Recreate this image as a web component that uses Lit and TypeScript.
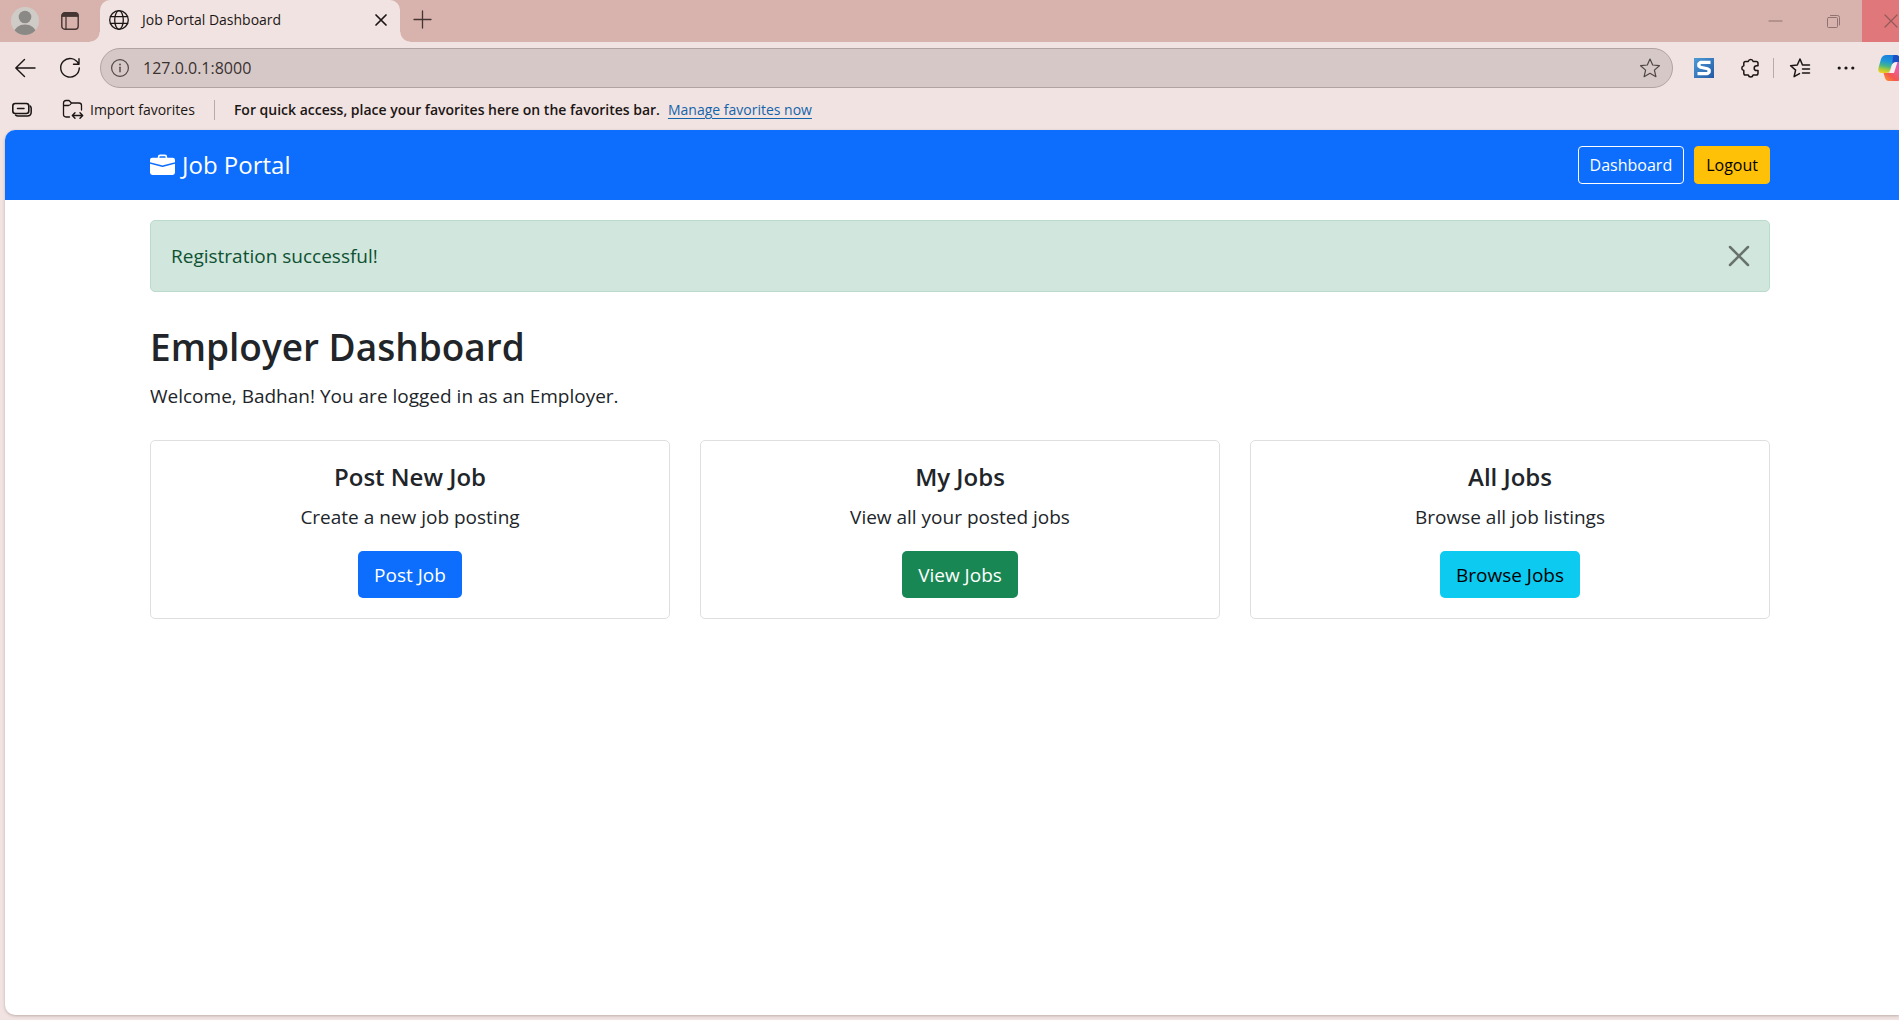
import { LitElement, html, svg, css } from "lit";
import { customElement, property, state } from "lit/decorators.js";

const icon = (size: number, body: unknown, view = `0 0 ${size} ${size}`) => html`
  <svg class="icon" width=${size} height=${size} viewBox=${view} aria-hidden="true">${body}</svg>
`;

const shared = css`
  *,
  *::before,
  *::after {
    box-sizing: border-box;
  }
  button {
    font: inherit;
    color: inherit;
    background: none;
    border: 0;
    padding: 0;
    margin: 0;
    cursor: pointer;
    display: inline-flex;
    align-items: center;
    justify-content: center;
  }
  .icon {
    display: block;
    flex: none;
    fill: none;
    stroke: currentColor;
    stroke-linecap: round;
    stroke-linejoin: round;
    overflow: visible;
  }
`;

@customElement("browser-tabs")
export class BrowserTabs extends LitElement {
  static styles = [
    shared,
    css`
      :host {
        display: flex;
        height: 42px;
        background: #d8b3ad;
        color: #453533;
        overflow: hidden;
      }
      .profile {
        width: 50px;
      }
      .panes {
        width: 40px;
      }
      .tab {
        position: relative;
        display: flex;
        align-items: center;
        width: 300px;
        margin-left: 10px;
        padding: 0 9px 2px;
        background: #f1e3e1;
        border-radius: 10px 10px 0 0;
        color: #1b1615;
        font-size: 14px;
        line-height: 20px;
      }
      .tab::before,
      .tab::after {
        content: "";
        position: absolute;
        bottom: 0;
        width: 10px;
        height: 10px;
      }
      .tab::before {
        left: -10px;
        background: radial-gradient(circle at 0 0, #d8b3ad 9px, #f1e3e1 10px);
      }
      .tab::after {
        right: -10px;
        background: radial-gradient(circle at 100% 0, #d8b3ad 9px, #f1e3e1 10px);
      }
      .title {
        flex: 1;
        margin-left: 13px;
        white-space: nowrap;
      }
      .close-tab {
        width: 20px;
        height: 20px;
      }
      .new-tab {
        width: 44px;
        padding-bottom: 3px;
      }
      .window {
        display: flex;
        margin-left: auto;
        margin-right: -21px;
        color: #8f7370;
      }
      .window button {
        width: 58px;
      }
      .window .quit {
        background: #e0777b;
        color: #94595a;
      }
    `,
  ];

  render() {
    return html`
      <button class="profile" aria-label="Profile">
        ${icon(
          28,
          svg`<defs><clipPath id="disc"><circle cx="14" cy="14" r="14"/></clipPath></defs>
          <g clip-path="url(#disc)" stroke="none">
            <rect width="28" height="28" fill="#cfccc8"/>
            <circle cx="14" cy="10" r="6.3" fill="#8b8986"/>
            <ellipse cx="14" cy="26" rx="11" ry="8.4" fill="#8b8986"/>
          </g>`,
        )}
      </button>
      <button class="panes" aria-label="Tab actions">
        ${icon(
          18,
          svg`<rect x=".8" y=".8" width="16.4" height="16.4" rx="3" stroke-width="1.4"/>
          <path d="M1 4V3.500Q1 1 3.500 1H14.500Q17 1 17 3.500V4Z" fill="currentColor"/>
          <path d="M5 5V17" stroke-width="1.300"/>`,
        )}
      </button>
      <div class="tab">
        ${icon(
          20,
          svg`<g stroke-width="1.300"><circle cx="10" cy="10" r="9.300"/>
          <ellipse cx="10" cy="10" rx="4.300" ry="9.300"/>
          <path d="M1.400 6.700H18.600M1.400 13.300H18.600"/></g>`,
        )}
        <span class="title">Job Portal Dashboard</span>
        <button class="close-tab" aria-label="Close tab">
          ${icon(10, svg`<path d="M0 0L10 10M10 0L0 10" stroke-width="1.700"/>`)}
        </button>
      </div>
      <button class="new-tab" aria-label="New tab">
        ${icon(17, svg`<path d="M8.500 0V17M0 8.500H17" stroke-width="1.300"/>`)}
      </button>
      <div class="window">
        <button aria-label="Minimise">
          ${icon(13, svg`<path d="M0 6H13" stroke-width="1.200"/>`)}
        </button>
        <button aria-label="Restore">
          ${icon(
            13,
            svg`<rect x=".5" y="2.500" width="10" height="10" rx="1"/>
            <path d="M3.500 .5H10.500Q12.500 .5 12.500 2.500V10"/>`,
          )}
        </button>
        <button class="quit" aria-label="Close window">
          ${icon(12, svg`<path d="M0 0L12 12M12 0L0 12" stroke-width="1.200"/>`)}
        </button>
      </div>
    `;
  }
}

@customElement("browser-toolbar")
export class BrowserToolbar extends LitElement {
  static styles = [
    shared,
    css`
      :host {
        display: flex;
        align-items: center;
        height: 52px;
        color: #1b1615;
        overflow: hidden;
      }
      .back {
        width: 50px;
        height: 40px;
      }
      .reload {
        width: 40px;
        height: 40px;
      }
      .address {
        flex: 1;
        display: flex;
        align-items: center;
        height: 40px;
        margin-left: 10px;
        padding: 0 12px 0 10px;
        border: 1px solid #b1a3a2;
        border-radius: 20px;
        background: #d6c8c7;
        color: #4f4645;
      }
      .address input {
        flex: 1;
        min-width: 0;
        margin-left: 14px;
        padding: 0;
        border: 0;
        outline: 0;
        background: none;
        color: #3a3231;
        font: inherit;
        font-size: 16px;
        line-height: 24px;
      }
      .tools {
        display: flex;
        align-items: center;
        margin-left: 8px;
        margin-right: -17px;
      }
      .tools button {
        width: 46px;
        height: 40px;
      }
      .rule {
        width: 1px;
        height: 20px;
        background: #b9a9a7;
        margin-right: 3px;
      }
      .tools .copilot {
        width: 47px;
        justify-content: flex-start;
        padding-left: 9px;
      }
    `,
  ];

  render() {
    return html`
      <button class="back" aria-label="Back">
        ${icon(20, svg`<path d="M20 10H.8M9.500 1.500L.8 10L9.500 18.500" stroke-width="1.400"/>`)}
      </button>
      <button class="reload" aria-label="Reload">
        ${icon(
          20,
          svg`<path d="M18.500 6A9.300 9.300 0 1 0 19.300 10M19 .8V6.300H13.500" stroke-width="1.400"/>`,
        )}
      </button>
      <div class="address">
        ${icon(
          18,
          svg`<circle cx="9" cy="9" r="8.400" stroke-width="1.200"/>
          <path d="M9 8.200V12.800" stroke-width="1.400"/>
          <circle cx="9" cy="5.500" r=".9" fill="currentColor" stroke="none"/>`,
        )}
        <input type="text" aria-label="Address" value="127.0.0.1:8000" />
        <button aria-label="Add to favorites">
          ${icon(
            20,
            svg`<path d="M10 1L12.700 7L19.400 7.700L14.400 12.100L15.900 18.700L10 15.300L4.100 18.700L5.600 12.100L.6 7.700L7.300 7Z" stroke-width="1.200"/>`,
          )}
        </button>
      </div>
      <div class="tools">
        <button aria-label="Screen capture">
          ${icon(
            20,
            svg`<defs><linearGradient id="sg" x1="0" y1="0" x2="1" y2="1">
              <stop offset="0" stop-color="#4c9bd6"/><stop offset="1" stop-color="#2459a4"/>
            </linearGradient></defs>
            <rect width="20" height="20" fill="url(#sg)" stroke="none"/>
            <path d="M16.500 4.300H6.500L4.800 6V8L6.500 9.300L13.500 10.700L15.200 12V14L13.500 15.700H3.500"
              stroke="#fff" stroke-width="3.200" stroke-linecap="butt"/>`,
          )}
        </button>
        <button aria-label="Extensions">
          ${icon(
            20,
            svg`<path d="M3.800 5.200Q3.800 3.400 5.600 3.400H8.300A2.450 2.450 0 0 1 13.100 3.400H16.200Q18 3.400 18 5.200V7.800H16.600A2.400 2.400 0 0 0 16.600 12.600H18V15.200Q18 17 16.200 17H13.100A2.450 2.450 0 0 1 8.300 17H5.600Q3.800 17 3.800 15.200V12.600A2.450 2.450 0 0 1 3.800 7.800Z" stroke-width="1.500"/>`,
          )}
        </button>
        <span class="rule"></span>
        <button aria-label="Favorites">
          ${icon(
            20,
            svg`<path d="M12.500 7L10 1L7.300 7L.6 7.700L5.600 12.100L4.100 18.700L9.500 15.600M12.500 7H19.500M12.500 11H19.500M12.500 15H19.500" stroke-width="1.500"/>`,
          )}
        </button>
        <button aria-label="Settings and more">
          ${icon(
            18,
            svg`<g fill="currentColor" stroke="none"><circle cx="2.200" cy="9" r="1.600"/><circle cx="9" cy="9" r="1.600"/><circle cx="15.800" cy="9" r="1.600"/></g>`,
          )}
        </button>
        <button class="copilot" aria-label="Copilot">
          ${icon(
            28,
            svg`<defs>
              <linearGradient id="c1" x1=".5" y1="0" x2=".3" y2="1">
                <stop offset="0" stop-color="#1a7fdc"/><stop offset=".35" stop-color="#1f97d8"/>
                <stop offset=".6" stop-color="#45b58a"/><stop offset=".8" stop-color="#a9c93a"/>
                <stop offset="1" stop-color="#f3cf22"/>
              </linearGradient>
              <linearGradient id="c2" x1="0" y1="1" x2="1" y2="0">
                <stop offset="0" stop-color="#ff9a2b"/><stop offset=".3" stop-color="#f4574f"/>
                <stop offset=".6" stop-color="#ee5c9c"/><stop offset="1" stop-color="#a85be8"/>
              </linearGradient>
            </defs>
            <g stroke="none">
              <path d="M19.500 27H10.500Q8 27 7 24L5.500 19H9Q12.500 19 13.500 15.500L15.500 11Q16.500 8 20 8H24Q28.800 8 27.400 13.500L25 23Q23.700 27 19.500 27Z" fill="url(#c2)"/>
              <path d="M8.500 1H18.500L17 7Q14.500 8 13.500 11.500L12 16.500Q11 19 8 19H4Q-.8 19 .6 13.500L3 5Q4.300 1 8.500 1Z" fill="url(#c1)"/>
              <path d="M15.500 1H18.500Q21 1 22 4L23 8H18Q15.500 8 14.300 10Q14.500 5 15.500 1Z" fill="#1d4fc4"/>
              <path d="M14.600 10.500Q15.800 8 19.500 8L16 19H10.500Q12.300 18 13 15.500Z" fill="#f6eef0"/>
            </g>`,
          )}
        </button>
      </div>
    `;
  }
}

@customElement("favorites-bar")
export class FavoritesBar extends LitElement {
  static styles = [
    shared,
    css`
      :host {
        display: flex;
        align-items: center;
        height: 36px;
        padding: 0 12px 5px;
        color: #1b1615;
        font-size: 14px;
        line-height: 20px;
        white-space: nowrap;
      }
      .import {
        gap: 7px;
        margin-left: 30px;
      }
      .rule {
        width: 1px;
        height: 20px;
        margin: 0 19px;
        background: #b9a9a7;
      }
      .hint {
        margin: 0;
        font-weight: 600;
      }
      a {
        margin-left: 8px;
        color: #1464ab;
        text-underline-offset: 3px;
      }
    `,
  ];

  render() {
    return html`
      <button aria-label="Saved pages">
        ${icon(
          20,
          svg`<rect x=".8" y="3.500" width="16" height="10" rx="2.500" stroke-width="1.600"/>
          <path d="M5.500 8.500H12" stroke-width="1.500"/>
          <path d="M18.200 6Q19.200 7 19.200 8.500V12Q19.200 16 15.200 16H6Q4.500 16 3.500 15" stroke-width="1.500"/>`,
        )}
      </button>
      <button class="import">
        ${icon(
          21,
          svg`<path d="M7.500 18H4Q1.500 18 1.500 15.500V4Q1.500 1.500 4 1.500H7L9.500 4H17Q19.500 4 19.500 6.500V11M1.500 6.500H6.500Q8 6.500 9.500 4" stroke-width="1.300"/>
          <path d="M10.500 16.500H20.500M13 13.800L10.300 16.500L13 19.200M18 13.800L20.700 16.500L18 19.200" stroke-width="1.400"/>`,
        )}
        Import favorites
      </button>
      <span class="rule"></span>
      <p class="hint">For quick access, place your favorites here on the favorites bar.</p>
      <a href="#favorites">Manage favorites now</a>
    `;
  }
}

@customElement("job-card")
export class JobCard extends LitElement {
  @property() heading = "";
  @property() text = "";
  @property() action = "";
  @property({ reflect: true }) tone = "primary";

  static styles = [
    shared,
    css`
      :host {
        display: flex;
        flex-direction: column;
        align-items: center;
        padding: 21px 20px 20px;
        border: 1px solid #dfdfdf;
        border-radius: 5px;
        background: #fff;
        text-align: center;
      }
      h2 {
        margin: 0 0 10px;
        font-size: 24px;
        line-height: 30px;
        font-weight: 600;
      }
      p {
        margin: 0 0 19px;
      }
      a {
        padding: 9px 16px 8px;
        border-radius: 5px;
        background: #0d6efd;
        color: #fff;
        text-decoration: none;
      }
      :host([tone="success"]) a {
        background: #198754;
      }
      :host([tone="info"]) a {
        background: #0dcaf0;
        color: #000;
      }
    `,
  ];

  render() {
    return html`
      <h2>${this.heading}</h2>
      <p>${this.text}</p>
      <a href="#jobs">${this.action}</a>
    `;
  }
}

@customElement("app-root")
export class AppRoot extends LitElement {
  @state() private notice = true;

  static styles = [
    shared,
    css`
      :host {
        display: flex;
        flex-direction: column;
        min-height: 100vh;
        background: #f1e3e1;
        font-family: "Open Sans", "Noto Sans", sans-serif;
        overflow: hidden;
      }
      .page {
        flex: 1;
        margin: 0 0 5px 5px;
        background: #fff;
        border-radius: 10px 0 0 10px;
        box-shadow: 0 1px 3px #8f7f7d88;
        color: #212529;
        font-size: 19px;
        line-height: 30px;
        overflow: hidden;
      }
      .band {
        padding-left: 16px;
      }
      .bar {
        background: #0d6efd;
      }
      .container {
        max-width: 1620px;
        margin: 0 auto;
      }
      nav {
        display: flex;
        align-items: center;
        gap: 10px;
        height: 70px;
      }
      .brand {
        display: flex;
        align-items: center;
        gap: 7px;
        margin-right: auto;
        color: #fff;
        font-size: 24px;
        text-decoration: none;
      }
      .brand .icon {
        fill: currentColor;
        stroke: none;
      }
      .btn {
        padding: 5px 11px;
        border: 1px solid #fff;
        border-radius: 4px;
        color: #fff;
        font-size: 16px;
        line-height: 26px;
        text-decoration: none;
      }
      .logout {
        border-color: #ffc107;
        background: #ffc107;
        color: #000;
      }
      .alert {
        display: flex;
        align-items: center;
        justify-content: space-between;
        margin-top: 20px;
        padding: 20px;
        border: 1px solid #badbcc;
        border-radius: 5px;
        background: #d1e7dd;
        color: #0f5132;
      }
      .alert .icon {
        color: #000;
        opacity: 0.5;
      }
      h1 {
        margin: 31px 0 10px;
        font-size: 37px;
        line-height: 48px;
        font-weight: 600;
      }
      .welcome {
        margin: 0 0 29px;
      }
      .cards {
        display: grid;
        grid-template-columns: repeat(3, 1fr);
        gap: 30px;
      }
    `,
  ];

  render() {
    return html`
      <browser-tabs></browser-tabs>
      <browser-toolbar></browser-toolbar>
      <favorites-bar></favorites-bar>
      <div class="page">
        <header class="band bar">
          <nav class="container">
            <a class="brand" href="#home">
              ${icon(
                25,
                svg`<path d="M6.500 1A1.500 1.500 0 0 0 5 2.500V3H1.500A1.500 1.500 0 0 0 0 4.500v1.384l7.614 2.030a1.500 1.500 0 0 0 .772 0L16 5.884V4.500A1.500 1.500 0 0 0 14.500 3H11v-.5A1.500 1.500 0 0 0 9.500 1h-3zm0 1h3a.5.5 0 0 1 .5.5V3H6v-.5a.5.5 0 0 1 .5-.5z"/>
                <path d="M0 12.500A1.500 1.500 0 0 0 1.500 14h13a1.500 1.500 0 0 0 1.500-1.500V6.850L8.129 8.947a.5.5 0 0 1-.258 0L0 6.850v5.650z"/>`,
                "0 0 16 16",
              )}
              Job Portal
            </a>
            <a class="btn" href="#dashboard">Dashboard</a>
            <a class="btn logout" href="#logout">Logout</a>
          </nav>
        </header>
        <main class="band">
          <div class="container">
            ${this.notice
              ? html`<div class="alert" role="alert">
                  <span>Registration successful!</span>
                  <button aria-label="Close" @click=${() => (this.notice = false)}>
                    ${icon(20, svg`<path d="M1 1L19 19M19 1L1 19" stroke-width="2.500"/>`)}
                  </button>
                </div>`
              : null}
            <h1>Employer Dashboard</h1>
            <p class="welcome">Welcome, Badhan! You are logged in as an Employer.</p>
            <div class="cards">
              <job-card heading="Post New Job" text="Create a new job posting" action="Post Job"></job-card>
              <job-card heading="My Jobs" text="View all your posted jobs" action="View Jobs" tone="success"></job-card>
              <job-card heading="All Jobs" text="Browse all job listings" action="Browse Jobs" tone="info"></job-card>
            </div>
          </div>
        </main>
      </div>
    `;
  }
}
